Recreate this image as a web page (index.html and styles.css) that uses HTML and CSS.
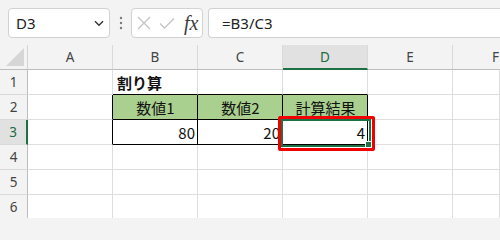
FILE: index.html
```html
<!DOCTYPE html>
<html lang="ja">
<head>
<meta charset="utf-8">
<link rel="stylesheet" href="styles.css">
</head>
<body>
<div class="toolbar">
  <div class="namebox">
    <span class="name">D3</span>
    <svg class="chev" width="10" height="7" viewBox="0 0 10 7"><path d="M1 1.2 L5 5.2 L9 1.2" fill="none" stroke="#333" stroke-width="1.4"/></svg>
  </div>
  <div class="grip">
    <svg width="4" height="14" viewBox="0 0 4 14"><circle cx="2" cy="2" r="1.2" fill="#7a7a7a"/><circle cx="2" cy="7" r="1.2" fill="#7a7a7a"/><circle cx="2" cy="12" r="1.2" fill="#7a7a7a"/></svg>
  </div>
  <div class="fxgroup">
    <svg class="ico" width="14" height="14" viewBox="0 0 14 14"><path d="M1 1 L13 13 M13 1 L1 13" fill="none" stroke="#c4c4c4" stroke-width="1.3"/></svg>
    <svg class="ico" width="16" height="13" viewBox="0 0 16 13"><path d="M1 6.5 L5.5 11 L15 1.5" fill="none" stroke="#c4c4c4" stroke-width="1.3"/></svg>
    <span class="fx">fx</span>
  </div>
  <div class="formula">=B3/C3</div>
</div>
<div class="sheet">
  <div class="corner"><svg width="18" height="18" viewBox="0 0 18 18"><path d="M18 0 L18 18 L0 18 Z" fill="#d6d6d6"/></svg></div>
  <div class="ch">A</div><div class="ch">B</div><div class="ch">C</div><div class="ch sel">D</div><div class="ch">E</div><div class="ch cut"><span>F</span></div>

  <div class="rh">1</div>
  <div class="c"></div><div class="c bt title">割り算</div><div class="c bt"></div><div class="c bt"></div><div class="c"></div><div class="c"></div>

  <div class="rh">2</div>
  <div class="c bl"></div><div class="c tb hd">数値1</div><div class="c tb hd">数値2</div><div class="c tb hd">計算結果</div><div class="c"></div><div class="c"></div>

  <div class="rh sel">3</div>
  <div class="c bl"></div><div class="c tb num">80</div><div class="c tb num">20</div><div class="c tb num">4</div><div class="c"></div><div class="c"></div>

  <div class="rh">4</div>
  <div class="c"></div><div class="c"></div><div class="c"></div><div class="c"></div><div class="c"></div><div class="c"></div>

  <div class="rh">5</div>
  <div class="c"></div><div class="c"></div><div class="c"></div><div class="c"></div><div class="c"></div><div class="c"></div>

  <div class="rh">6</div>
  <div class="c"></div><div class="c"></div><div class="c"></div><div class="c"></div><div class="c"></div><div class="c"></div>

  <div class="selbox"><span class="handle"></span></div>
  <div class="redbox"></div>
</div>
</body>
</html>
```

FILE: styles.css
```css
html, body {
  margin: 0;
  padding: 0;
  width: 500px;
  height: 218px;
  overflow: hidden;
  background: #f3f3f3;
}

.toolbar {
  height: 45px;
  box-sizing: border-box;
  padding: 8px 0 0 8px;
  display: flex;
  align-items: flex-start;
  font-family: "Noto Sans", "Segoe UI", sans-serif;
}

.namebox {
  width: 102px;
  height: 30px;
  box-sizing: border-box;
  border: 1px solid #d2d2d2;
  border-radius: 4px;
  background: #fff;
  display: flex;
  align-items: center;
  justify-content: space-between;
  padding: 0 5px 0 7px;
}

.name {
  font-size: 15px;
  color: #222;
}

.chev {
  display: block;
  margin-top: 1px;
}

.grip {
  width: 21px;
  height: 30px;
  display: flex;
  align-items: center;
  justify-content: center;
}

.grip svg {
  display: block;
}

.fxgroup {
  width: 72px;
  height: 30px;
  box-sizing: border-box;
  border: 1px solid #d2d2d2;
  border-radius: 4px;
  background: #fff;
  display: flex;
  align-items: center;
  padding: 0 0 0 5px;
  gap: 8px;
}

.ico {
  display: block;
}

.fx {
  font-family: "Liberation Serif", serif;
  font-style: italic;
  font-size: 20px;
  color: #3c3c3c;
  margin-left: 1px;
  line-height: 1;
}

.formula {
  flex: 1;
  margin-left: 5px;
  height: 30px;
  box-sizing: border-box;
  border: 1px solid #d2d2d2;
  border-right: none;
  border-radius: 4px 0 0 4px;
  background: #fff;
  font-size: 15px;
  color: #222;
  line-height: 28px;
  padding-left: 13px;
}

.sheet {
  position: relative;
  display: grid;
  grid-template-columns: 28px repeat(5, 85px) 47px;
  grid-auto-rows: 25px;
  width: 500px;
  overflow: hidden;
  background: #fff;
}

.corner {
  background: #f3f3f3;
  border-right: 1px solid #d4d4d4;
  border-bottom: 1px solid #bdbdbd;
  box-sizing: border-box;
  display: flex;
  align-items: flex-end;
  justify-content: flex-end;
  padding: 0 3px 3px 0;
}

.corner svg {
  display: block;
}

.ch {
  background: #f3f3f3;
  border-right: 1px solid #d9d9d9;
  border-bottom: 1px solid #bdbdbd;
  box-sizing: border-box;
  display: flex;
  align-items: center;
  justify-content: center;
  font-family: "Noto Sans", "Segoe UI", sans-serif;
  font-size: 13.5px;
  color: #444;
}

.ch.cut {
  justify-content: flex-end;
  border-right: none;
  padding-right: 1px;
}

.ch.sel {
  background: #e1e1e1;
  color: #1d6b40;
  border-bottom: 2px solid #1e7145;
}

.rh {
  background: #f3f3f3;
  border-right: 1px solid #bdbdbd;
  border-bottom: 1px solid #d9d9d9;
  box-sizing: border-box;
  display: flex;
  align-items: center;
  justify-content: center;
  font-family: "Noto Sans", "Segoe UI", sans-serif;
  font-size: 13.5px;
  color: #444;
}

.rh.sel {
  background: #e1e1e1;
  color: #1d6b40;
  border-right: 2px solid #1e7145;
}

.c {
  border-right: 1px solid #dedede;
  border-bottom: 1px solid #dedede;
  box-sizing: border-box;
  font-family: "Noto Sans CJK JP", "Noto Sans", sans-serif;
  font-size: 15px;
  color: #111;
  display: flex;
  align-items: center;
  white-space: nowrap;
  padding: 1px 3px 0 4px;
}

.c.bt {
  border-bottom-color: #000;
}

.c.bl {
  border-right-color: #000;
}

.c.tb {
  border-right-color: #000;
  border-bottom-color: #000;
}

.title {
  font-weight: bold;
}

.hd {
  background: #a9d08e;
  justify-content: center;
}

.num {
  justify-content: flex-end;
  padding-right: 2px;
}

.selbox {
  position: absolute;
  left: 281px;
  top: 74px;
  width: 90px;
  height: 28px;
  box-sizing: border-box;
  border: 2px solid #1e7145;
}

.handle {
  position: absolute;
  right: -3px;
  bottom: -3px;
  width: 5px;
  height: 5px;
  background: #1e7145;
  border: 1px solid #fff;
}

.redbox {
  position: absolute;
  left: 278px;
  top: 71px;
  width: 97px;
  height: 35px;
  box-sizing: border-box;
  border: 3px solid #f00000;
  border-radius: 2px;
}
```
